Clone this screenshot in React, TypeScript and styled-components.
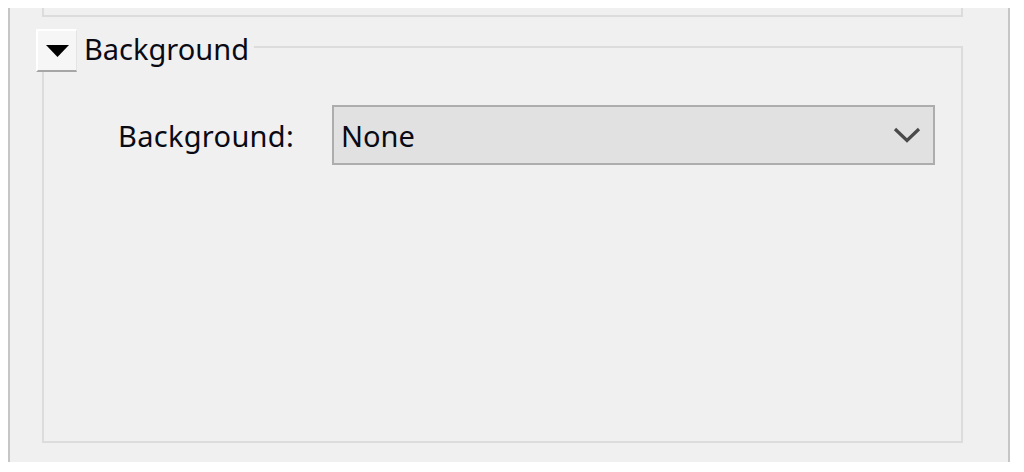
import React from "react";
import styled, { createGlobalStyle } from "styled-components";

const GlobalStyle = createGlobalStyle`
  html, body {
    margin: 0;
    padding: 0;
    background: #ffffff;
  }
  body {
    font-family: "Noto Sans", "Open Sans", "DejaVu Sans", sans-serif;
    color: #0a0a14;
  }
  * { box-sizing: border-box; }
`;

const Frame = styled.div`
  margin: 8px 14px 0 8px;
  height: 454px;
  background: #f0f0f0;
  border-left: 2px solid #c6c6c6;
  border-right: 2px solid #c6c6c6;
  padding: 0 45px 0 32px;
  display: flex;
  flex-direction: column;
`;

const PrevGroup = styled.div`
  height: 9px;
  border: 2px solid #dcdcdc;
  border-top: none;
`;

const Group = styled.section`
  margin-top: 12px;
  display: flex;
  flex-direction: column;
`;

const Header = styled.div`
  display: flex;
  align-items: center;
  height: 43px;
  margin-left: -6px;
`;

const ToggleButton = styled.button`
  width: 41px;
  height: 43px;
  padding: 0;
  margin: 0;
  display: flex;
  align-items: center;
  justify-content: center;
  background: #f6f6f6;
  border-top: 2px solid #ffffff;
  border-left: 2px solid #ffffff;
  border-right: 1px solid #e4e4e4;
  border-bottom: 2px solid #a6a6a6;
  cursor: pointer;
`;

const Title = styled.span`
  margin-left: 7px;
  padding-bottom: 4px;
  font-size: 29px;
  line-height: 1;
  white-space: nowrap;
`;

const HeaderLine = styled.div`
  flex: 1;
  align-self: stretch;
  margin-top: 17px;
  margin-left: 5px;
  border-top: 2px solid #dcdcdc;
  border-right: 2px solid #dcdcdc;
`;

const Body = styled.div`
  height: 371px;
  border: 2px solid #dcdcdc;
  border-top: none;
  padding: 33px 26px 0 74px;
`;

const FieldRow = styled.div`
  display: flex;
  align-items: center;
`;

const Label = styled.label`
  width: 214px;
  font-size: 29px;
  letter-spacing: 0.3px;
  line-height: 1;
  white-space: nowrap;
`;

const Combo = styled.div`
  flex: 1;
  height: 60px;
  display: flex;
  align-items: center;
  justify-content: space-between;
  background: #e1e1e1;
  border: 2px solid #adadad;
  padding: 0 12px 0 7px;
`;

const ComboValue = styled.span`
  font-size: 29px;
  line-height: 1;
`;

const Chevron = () => (
  <svg width="28" height="16" viewBox="0 0 28 16" aria-hidden="true">
    <polyline
      points="2,2 14,13.5 26,2"
      fill="none"
      stroke="#4a4a4a"
      strokeWidth="3.2"
      strokeLinejoin="miter"
    />
  </svg>
);

const Triangle = () => (
  <svg width="23" height="12" viewBox="0 0 23 12" aria-hidden="true">
    <polygon points="0,0 23,0 11.5,12" fill="#000000" />
  </svg>
);

export default function App() {
  return (
    <>
      <GlobalStyle />
      <Frame>
        <PrevGroup />
        <Group>
          <Header>
            <ToggleButton aria-label="Collapse">
              <Triangle />
            </ToggleButton>
            <Title>Background</Title>
            <HeaderLine />
          </Header>
          <Body>
            <FieldRow>
              <Label>Background:</Label>
              <Combo>
                <ComboValue>None</ComboValue>
                <Chevron />
              </Combo>
            </FieldRow>
          </Body>
        </Group>
      </Frame>
    </>
  );
}
